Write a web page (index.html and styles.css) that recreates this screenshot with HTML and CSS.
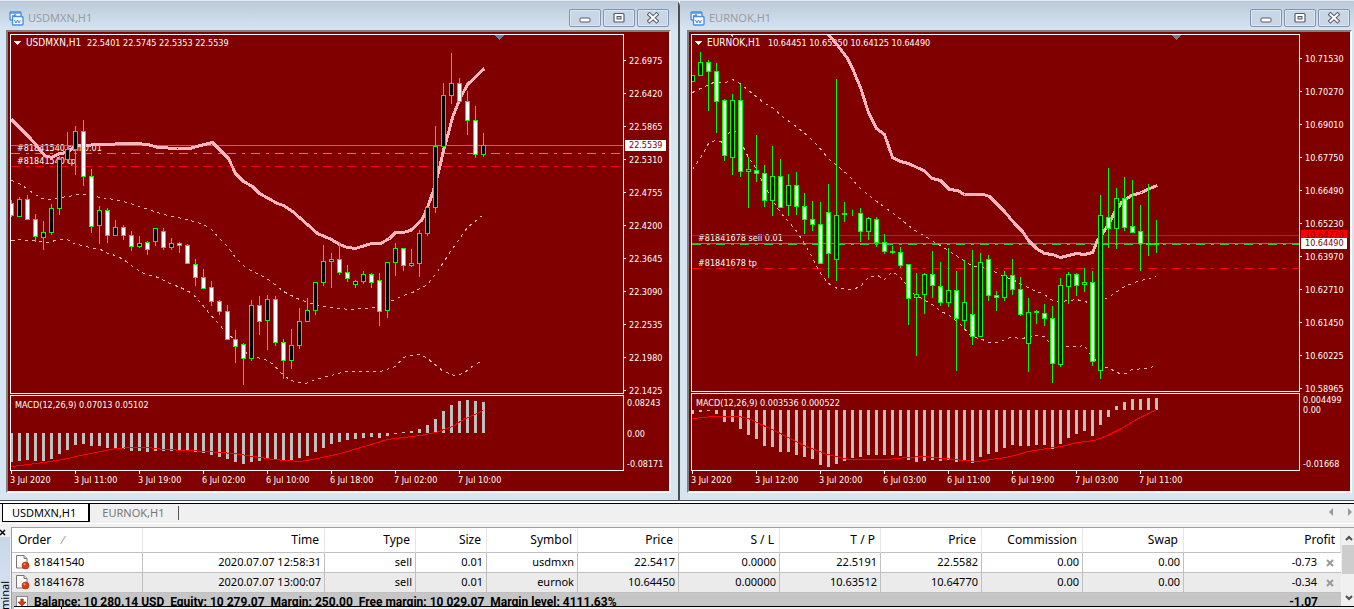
FILE: index.html
```
<!DOCTYPE html>
<html lang="en">
<head>
<meta charset="utf-8">
<title>Charts</title>
<link rel="stylesheet" href="styles.css">
</head>
<body>
<svg class="defs" width="0" height="0" aria-hidden="true">
  <symbol id="i-chart" viewBox="0 0 15 15">
    <rect x="1" y="1" width="11" height="8" rx="1" fill="#fff" stroke="#4a8ee0" stroke-width="1.4"/>
    <path d="M1 2h11" stroke="#4a8ee0" stroke-width="1.4"/>
    <path d="M3 6l1-2 1 2 1-3 1 2" fill="none" stroke="#4a8ee0"/>
    <rect x="3.5" y="5.500" width="10.500" height="8.500" rx="1" fill="#fff" stroke="#4a8ee0" stroke-width="1.4"/>
    <path d="M5.500 9l1.500 3 1.500-3 1.500 3 1.500-3" fill="none" stroke="#3577cc" stroke-width=".9"/>
  </symbol>
  <symbol id="i-min" viewBox="0 0 12 12"><rect x="1" y="6" width="10" height="4" rx="1" fill="#fff" stroke="#535b70"/></symbol>
  <symbol id="i-max" viewBox="0 0 12 12"><rect x="1" y="1.500" width="10" height="8.500" rx="1" fill="#fff" stroke="#535b70" stroke-width="1.2"/><rect x="4" y="4.500" width="4" height="2.500" fill="#c8d5e5" stroke="#535b70"/></symbol>
  <symbol id="i-close" viewBox="0 0 12 12"><path d="M2.500 2.500l7 6.500M9.500 2.500l-7 6.500" stroke="#535b70" stroke-width="4" stroke-linecap="square"/><path d="M2.500 2.500l7 6.500M9.500 2.500l-7 6.500" stroke="#fff" stroke-width="2" stroke-linecap="square"/></symbol>
  <symbol id="i-order" viewBox="0 0 15 16">
    <path d="M1.500 1.500h7.500l3 3v9.500h-10.500z" fill="#fff" stroke="#777"/>
    <path d="M9 1.500v3h3" fill="#ddd" stroke="#777"/>
    <circle cx="10.500" cy="11.500" r="3.500" fill="#dd3c14" stroke="#a22506" stroke-width=".6"/>
    <circle cx="9.500" cy="10.300" r="1" fill="#ff9a77"/>
  </symbol>
  <symbol id="i-balance" viewBox="0 0 15 16"><rect x="1.500" y="2.500" width="11" height="13" fill="#fff" stroke="#888"/><path d="M5.800 5h2.400v3h2.800L7 12 3 8h2.800z" fill="#dd3c14" stroke="#a22506" stroke-width=".7"/></symbol>
  <symbol id="i-x" viewBox="0 0 8 8"><path d="M1 1l6 6M7 1L1 7" stroke="#9a9a9a" stroke-width="2"/></symbol>
</svg>

<main class="workspace">
  <section class="window">
    <header class="titlebar">
      <svg class="window-icon"><use href="#i-chart"/></svg>
      <h2 class="window-title">USDMXN,H1</h2>
      <button class="window-button" aria-label="Minimize"><svg><use href="#i-min"/></svg></button>
      <button class="window-button" aria-label="Maximize"><svg><use href="#i-max"/></svg></button>
      <button class="window-button" aria-label="Close"><svg><use href="#i-close"/></svg></button>
    </header>
    <div class="chart chart-usd">
      <div class="plot plot-price">
        <svg class="canvas" id="usd-price">
          <path class="marker-open" d="M3 6h7l-3.500 4z"/>
          <text class="label label-symbol" x="15" y="11">USDMXN,H1</text>
          <text class="label" x="76" y="11">22.5401 22.5745 22.5353 22.5539</text>
          <text class="label" x="6" y="116">#81841540 sell 0.01</text>
          <text class="label" x="6" y="129">#81841540 tp</text>
          <path class="marker-shift" d="M483 0h10l-5 5z"/>
        </svg>
      </div>
      <div class="scale scale-price">
        <span>22.6975</span><span>22.6420</span><span>22.5865</span><span>22.5310</span><span>22.4755</span><span>22.4200</span><span>22.3645</span><span>22.3090</span><span>22.2535</span><span>22.1980</span><span>22.1425</span>
        <b class="badge badge-usd">22.5539</b>
      </div>
      <div class="plot plot-macd">
        <svg class="canvas" id="usd-macd"><text class="label" x="4" y="12">MACD(12,26,9) 0.07013 0.05102</text></svg>
      </div>
      <div class="scale scale-macd"><span>0.08243</span><span>0.00</span><span>-0.08171</span></div>
      <div class="times"><span>3 Jul 2020</span><span>3 Jul 11:00</span><span>3 Jul 19:00</span><span>6 Jul 02:00</span><span>6 Jul 10:00</span><span>6 Jul 18:00</span><span>7 Jul 02:00</span><span>7 Jul 10:00</span></div>
    </div>
  </section>

  <section class="window window-right">
    <header class="titlebar">
      <svg class="window-icon"><use href="#i-chart"/></svg>
      <h2 class="window-title">EURNOK,H1</h2>
      <button class="window-button" aria-label="Minimize"><svg><use href="#i-min"/></svg></button>
      <button class="window-button" aria-label="Maximize"><svg><use href="#i-max"/></svg></button>
      <button class="window-button" aria-label="Close"><svg><use href="#i-close"/></svg></button>
    </header>
    <div class="chart chart-eur">
      <div class="plot plot-price">
        <svg class="canvas" id="eur-price">
          <path class="marker-open" d="M3 6h7l-3.500 4z"/>
          <text class="label label-symbol" x="15" y="11">EURNOK,H1</text>
          <text class="label" x="76" y="11">10.64451 10.65350 10.64125 10.64490</text>
          <text class="label" x="6" y="206">#81841678 sell 0.01</text>
          <text class="label" x="6" y="231">#81841678 tp</text>
          <path class="marker-shift" d="M479 0h10l-5 5z"/>
        </svg>
      </div>
      <div class="scale scale-price">
        <span>10.71530</span><span>10.70270</span><span>10.69010</span><span>10.67750</span><span>10.66490</span><span>10.65230</span><span>10.63970</span><span>10.62710</span><span>10.61450</span><span>10.60225</span><span>10.58965</span>
        <b class="badge badge-ask">10.64770</b>
        <b class="badge badge-eur">10.64490</b>
      </div>
      <div class="plot plot-macd">
        <svg class="canvas" id="eur-macd"><text class="label" x="4" y="12">MACD(12,26,9) 0.003536 0.000522</text></svg>
      </div>
      <div class="scale scale-macd"><span>0.004499</span><span>0.00</span><span>-0.01668</span></div>
      <div class="times"><span>3 Jul 2020</span><span>3 Jul 12:00</span><span>3 Jul 20:00</span><span>6 Jul 03:00</span><span>6 Jul 11:00</span><span>6 Jul 19:00</span><span>7 Jul 03:00</span><span>7 Jul 11:00</span></div>
    </div>
  </section>
</main>

<nav class="tabs">
  <button class="tab tab-active">USDMXN,H1</button>
  <button class="tab">EURNOK,H1</button>
  <span class="tab-divider"></span>
  <button class="tab-arrow" aria-label="Scroll left"><svg viewBox="0 0 4 8"><path d="M4 0v8L0 4z"/></svg></button>
  <button class="tab-arrow" aria-label="Scroll right"><svg viewBox="0 0 4 8"><path d="M0 0v8l4-4z"/></svg></button>
</nav>

<section class="terminal">
  <aside class="rail">
    <button class="rail-close" aria-label="Close panel"><svg viewBox="0 0 8 8"><path d="M1 1l5 5M6 1L1 6" stroke="#000" stroke-width="1.500"/></svg></button>
    <div class="rail-grip"><span class="rail-name">Terminal</span></div>
  </aside>
  <div class="orders-wrap">
    <table class="orders">
      <colgroup><col class="c-order"><col class="c-time"><col class="c-type"><col class="c-size"><col class="c-type"><col class="c-num"><col class="c-num"><col class="c-num"><col class="c-num"><col class="c-num"><col class="c-num"><col></colgroup>
      <thead>
        <tr><th>Order <i class="sort">⁄</i></th><th>Time</th><th>Type</th><th>Size</th><th>Symbol</th><th>Price</th><th>S / L</th><th>T / P</th><th>Price</th><th>Commission</th><th>Swap</th><th>Profit</th></tr>
      </thead>
      <tbody>
        <tr><td><svg class="row-icon"><use href="#i-order"/></svg>81841540</td><td>2020.07.07 12:58:31</td><td>sell</td><td>0.01</td><td>usdmxn</td><td>22.5417</td><td>0.0000</td><td>22.5191</td><td>22.5582</td><td>0.00</td><td>0.00</td><td>-0.73<button class="row-close" aria-label="Close order"><svg><use href="#i-x"/></svg></button></td></tr>
        <tr><td><svg class="row-icon"><use href="#i-order"/></svg>81841678</td><td>2020.07.07 13:00:07</td><td>sell</td><td>0.01</td><td>eurnok</td><td>10.64450</td><td>0.00000</td><td>10.63512</td><td>10.64770</td><td>0.00</td><td>0.00</td><td>-0.34<button class="row-close" aria-label="Close order"><svg><use href="#i-x"/></svg></button></td></tr>
      </tbody>
      <tfoot>
        <tr><td colspan="11"><svg class="row-icon"><use href="#i-balance"/></svg>Balance: 10 280.14 USD&nbsp; Equity: 10 279.07&nbsp; Margin: 250.00&nbsp; Free margin: 10 029.07&nbsp; Margin level: 4111.63%</td><td>-1.07</td></tr>
      </tfoot>
    </table>
    <div class="scrollbar">
      <svg class="scroll-arrow" viewBox="0 0 8 6"><path d="M1 5l3-3 3 3"/></svg>
      <div class="scroll-thumb"></div>
      <svg class="scroll-arrow scroll-down" viewBox="0 0 8 6"><path d="M1 1l3 3 3-3"/></svg>
    </div>
    <div class="panel-tabs"><span class="panel-tab"></span></div>
  </div>
</section>
<script src="charts.js"></script>
</body>
</html>
```
FILE: styles.css
```
* { box-sizing: border-box; }
html, body { height: 100%; }
body {
  margin: 0;
  display: flex;
  flex-direction: column;
  overflow: hidden;
  background: #f0f0f0;
  color: #000;
  font-family: "Noto Sans", "Open Sans", sans-serif;
  font-size: 11px;
}
button { font: inherit; color: inherit; background: none; border: 0; padding: 0; margin: 0; }
svg { display: block; }
.defs { position: absolute; }

/* chart windows */
.workspace {
  flex: 1;
  min-height: 0;
  display: grid;
  grid-template-columns: 680fr 674fr;
  background: #fff;
  padding-bottom: 2px;
}
.window {
  display: flex;
  flex-direction: column;
  min-width: 0;
  min-height: 0;
  padding: 0 7px 7px 6px;
  background: #d7e4f2;
  border-right: 2px solid #4d4f4c;
  border-bottom: 1px solid #4d4f58;
  border-top-right-radius: 6px;
}
.window-right {
  padding: 0 2px 7px 7px;
  border-right: 0;
  border-top-right-radius: 0;
}
.titlebar {
  flex: none;
  display: flex;
  align-items: center;
  gap: 2px;
  height: 30px;
  margin: 0 -7px 0 -6px;
  padding: 5px 9px 0 9px;
  border-top: 1px solid #e3e9f0;
  background: linear-gradient(#bccad8, #d7e4f2);
}
.window-right .titlebar { margin: 0 -2px 0 -7px; padding: 5px 4px 0 10px; }
.window-icon { width: 15px; height: 15px; }
.window-title {
  flex: 1;
  margin: 0 0 0 2px;
  font-size: 11px;
  font-weight: 400;
  line-height: 18px;
  color: #979ca2;
}
.window-button {
  width: 32px;
  height: 18px;
  display: grid;
  place-items: center;
  border: 1px solid #8393b3;
  border-radius: 2px;
  box-shadow: inset 0 0 0 1px #dbe6f1;
  background: #c9d6e4;
}
.window-button svg { width: 12px; height: 12px; }

.chart {
  flex: 1;
  min-height: 0;
  display: grid;
  row-gap: 1px;
  padding: 2px 0 0 2px;
  background: #800000;
  border: 2px solid #808080;
  border-right-color: #fff;
  border-bottom-color: #fff;
  color: #fff;
  font-family: "DejaVu Sans Condensed", "Noto Sans", sans-serif;
  font-size: 9px;
}
.chart-usd { grid-template: 1fr 76px 19px / 1fr 45px; }
.chart-eur { grid-template: 1fr 78px 19px / 1fr 50px; }
.plot { border: 1px solid #fff; min-width: 0; min-height: 0; overflow: hidden; }
.canvas { width: 100%; height: 100%; shape-rendering: crispEdges; }
.label { fill: #fff; white-space: pre; }
.label-symbol { font-size: 10px; }
.marker-open { fill: #fff; }
.marker-shift { fill: #708090; }
.wick { stroke: #0f0; }
.body { stroke: #0f0; }
.up { fill: #000; }
.down { fill: #fff; }
.average { fill: none; stroke: #ffb6c1; stroke-width: 3; }
.band { fill: none; stroke: #ffb6c1; stroke-dasharray: 3 4; }
.bar { fill: #c0c0c0; }
.signal { fill: none; stroke: #f00; }
.bid { stroke: #708090; }
.ask { stroke: #f00; }
.entry { stroke: #32cd32; stroke-dasharray: 9 6 3 6; }
.target { stroke: #f00; stroke-dasharray: 9 6 3 6; }

.scale { position: relative; display: flex; flex-direction: column; min-height: 0; }
.scale-price { padding-top: 10px; }
.chart-eur .scale-price { padding-top: 8px; }
.scale-price span { position: relative; flex: none; height: 33px; line-height: 35px; padding-left: 5px; }
.scale-price span::before {
  content: "";
  position: absolute;
  left: 0;
  top: 16px;
  width: 2px;
  height: 1px;
  background: #fff;
}
.badge {
  position: absolute;
  left: 1px;
  width: 41px;
  height: 11px;
  line-height: 11px;
  padding-left: 4px;
  font-weight: 400;
  background: #fff;
  color: #800000;
}
.chart-eur .badge { width: 46px; }
.badge-usd { top: 106px; }
.badge-eur { top: 204px; }
.chart-eur .badge-ask { top: 196px; background: #f00; }
.scale-macd { padding: 1px 0 0 3px; justify-content: space-between; line-height: 14px; }
.chart-eur .scale-macd { padding: 2px 0 2px 3px; justify-content: flex-start; line-height: 10px; }
.chart-eur .scale-macd span:last-child { margin-top: auto; }
.times { display: flex; grid-column: 1 / -1; margin-top: -1px; }
.times span { position: relative; flex: none; width: 64px; line-height: 19px; }
.times span::before {
  content: "";
  position: absolute;
  left: 1px;
  top: 0;
  width: 1px;
  height: 3px;
  background: #fff;
}

/* chart tabs */
.tabs {
  flex: none;
  display: flex;
  height: 24px;
  padding: 0 2px;
  border-top: 1px solid #000;
  background: linear-gradient(#f0f0f0 19px, #fff 19px, #fff 20px, #f0f0f0 20px);
}
.tab { height: 18px; line-height: 16px; padding: 0 14px 0 12px; color: #777; }
.tab-active {
  padding: 0 12px 0 9px;
  background: #fff;
  color: #000;
  border: 1px solid #000;
  border-top: 0;
  border-right-width: 2px;
}
.tab-divider { width: 1px; height: 14px; margin: 2px auto 0 0; background: #555; }
.tab-arrow { width: 4px; height: 8px; margin: 4px 0 0 15px; }
.tab-arrow svg { width: 4px; height: 8px; fill: #999; }

/* terminal panel */
.terminal { flex: none; display: flex; height: 82px; overflow: hidden; }
.rail { flex: none; width: 11px; display: flex; flex-direction: column; }
.rail-close { height: 14px; width: 8px; margin-left: -1px; }
.rail-close svg { width: 8px; height: 8px; margin-top: 2px; }
.rail-grip { flex: 1; width: 10px; background: linear-gradient(#c9d8e8, #dae7f4); }
.rail-name { display: block; width: 10px; margin-top: 44px; writing-mode: vertical-rl; transform: rotate(180deg); line-height: 10px; }
.orders-wrap {
  position: relative;
  flex: 1;
  min-width: 0;
  display: flex;
  border-top: 1px solid #a0a0a0;
  border-left: 1px solid #a0a0a0;
}
.orders { flex: 1; align-self: flex-start; width: 0; border-collapse: separate; border-spacing: 0; table-layout: fixed; background: #fff; }
.c-order { width: 131px; }
.c-time { width: 182px; }
.c-type { width: 91px; }
.c-size { width: 71px; }
.c-num { width: 101px; }
.orders th {
  height: 25px;
  padding: 0 5px;
  font-size: 12px;
  font-weight: 400;
  line-height: 16px;
  text-align: right;
  border-right: 1px solid #e5e5e5;
  border-bottom: 1px solid #c0c0c0;
}
.orders th:first-child { padding-left: 6px; }
.orders td {
  height: 20px;
  padding: 0 3px 0 0;
  line-height: 18px;
  text-align: right;
  vertical-align: top;
  white-space: nowrap;
  border-right: 1px solid #c0c0c0;
  border-bottom: 1px solid #c0c0c0;
}
.orders th:first-child, .orders td:first-child { text-align: left; }
.orders td:last-child { border-right: 0; }
.orders tbody tr:nth-child(2) td { background: #ebebeb; }
.orders tfoot td { height: 18px; background: #c6c6c6; font-family: Roboto, "Noto Sans", sans-serif; font-size: 12px; font-weight: 700; border: 0; }
.orders tfoot td:last-child { padding-right: 23px; }
.sort { margin-left: 8px; font-size: 11px; color: #888; font-style: normal; }
.row-icon { display: inline-block; width: 15px; height: 16px; margin: 1px 4px 0 3px; vertical-align: top; }
.row-close { width: 8px; height: 8px; margin: 6px 4px 0 9px; vertical-align: top; }
.row-close svg { width: 8px; height: 8px; }
.scrollbar { flex: none; width: 13px; display: flex; flex-direction: column; align-items: flex-end; padding: 7px 1px 8px 0; background: #f0f0f0; }
.scroll-arrow { width: 8px; height: 6px; fill: none; stroke: #505050; stroke-width: 2; }
.scroll-down { margin-top: auto; }
.scroll-thumb { width: 12px; height: 29px; margin: 4px -1px 0 0; background: #cdcdcd; }
.panel-tabs {
  position: absolute;
  left: 2px;
  right: 0;
  bottom: 0;
  height: 3px;
  border-top: 1px solid #000;
  background: #f0f0f0;
}
.panel-tab { display: block; width: 48px; height: 2px; background: #fff; border-right: 1px solid #000; }
```
FILE: charts.js
```
// Bars: high, body top, body bottom, low, kind (u = up, d = down, n = flat).
const charts = [
  {
    id: "usd", left: 11, top: 35, macdTop: 396, zero: 433,
    levels: [["bid", 145], ["entry", 153], ["target", 166]],
    bars: `200 203 216 217 d|197 199 217 217 u|195 199 220 220 d|214 219 237 242 d|221 232 238 250 u|204 208 233 235 u|156 159 209 215 u|132 149 160 163 u|126 131 150 175 u|120 131 177 186 d|169 176 227 233 d|206 210 226 244 u|208 210 236 243 d|220 227 236 236 u|225 227 236 240 d|231 235 247 251 d|236 243 247 248 u|241 242 250 255 d|228 228 242 246 u|228 231 248 250 d|238 243 248 250 u|242 243 246 253 d|244 245 264 264 d|259 264 278 286 d|269 277 289 289 d|281 287 302 306 d|300 301 312 315 d|305 311 340 340 d|330 339 347 363 d|343 344 359 385 d|300 305 359 361 u|296 305 322 335 d|295 299 321 350 u|296 299 343 346 d|339 342 361 379 d|329 345 361 369 u|308 321 346 349 u|298 310 322 322 u|282 282 311 315 u|245 261 283 286 u|253 259 262 288 u|242 259 273 275 d|265 272 279 282 d|280 281 285 288 u|271 274 282 284 u|273 274 283 288 d|273 280 312 326 d|262 262 311 318 u|243 248 263 276 u|248 248 266 271 d|249 263 266 267 u|230 233 264 277 u|207 207 234 236 u|126 146 208 213 u|83 95 147 147 u|53 83 96 104 u|78 83 102 102 d|91 101 121 135 d|106 120 155 158 d|133 145 155 157 u`,
    average: "11,119 30,138 35,144 44,155 51,157 59,153 67,152 73,147 78,145 103,144 127,143 135,143 147,144 158,147 177,148 189,148 200,145 212,142 228,158 235,173 243,181 252,186 259,193 277,203 283,205 292,211 307,224 317,233 331,239 339,244 347,247 355,248 371,243 380,243 389,238 395,232 403,232 410,230 421,220 427,207 433,190 438,172 443,150 447,136 452,117 459,99 467,84 484,68",
    bands: [
      "11,180 19,183 33,193 42,198 51,199 59,197 68,196 77,194 87,194 100,197 120,200 133,204 163,214 187,219 203,224 211,229 219,238 227,246 235,257 245,267 268,279 283,291 299,299 317,305 339,308 350,309 373,307 383,305 390,301 403,295 412,292 427,284 437,271 452,248 467,227 482,215",
      "11,240 20,239 48,242 58,239 67,239 75,244 83,245 92,248 100,249 107,253 115,255 123,259 131,265 143,273 150,275 158,277 167,282 180,287 192,293 200,302 208,312 219,324 224,331 233,338 240,345 245,352 253,356 267,360 273,364 280,372 290,380 305,383 315,379 338,373 343,371 380,371 395,366 403,357 408,355 420,354 427,358 443,371 454,375 463,373 473,365 482,360"
    ],
    macd: "462 461 460 461 461 459 454 450 445 444 446 446 448 448 449 451 451 452 451 451 451 450 450 452 453 455 457 459 462 464 462 461 459 459 461 460 458 456 452 448 444 442 440 439 438 437 438 436 434 432 431 429 425 419 411 405 401 400 401 402",
    signal: "11,466 28,464 43,462 63,459 80,455 100,451 115,448 132,447 147,447 163,449 187,450 207,451 233,453 253,456 273,459 300,461 317,458 340,453 353,449 367,445 387,439 403,437 420,435 435,432 452,426 463,419 483,410"
  },
  {
    id: "eur", left: 692, top: 35, macdTop: 394, zero: 410,
    levels: [["ask", 235], ["entry", 244], ["bid", 243], ["target", 268]],
    bars: `75 75 82 82 u|52 62 76 76 u|60 62 72 111 d|63 71 102 133 d|99 100 156 161 d|94 100 158 175 u|84 100 172 177 d|157 169 172 208 u|135 170 174 182 d|165 173 201 207 d|146 176 201 216 u|159 176 208 208 d|174 185 206 216 u|172 185 207 215 d|193 206 220 234 d|201 219 225 231 d|202 224 264 264 d|184 212 254 278 d|79 215 260 281 u|202 213 215 222 n|210 213 214 216 n|208 213 232 242 d|217 218 232 240 u|217 219 243 247 d|234 242 252 254 d|246 251 253 254 n|247 252 266 268 d|264 264 299 325 d|273 294 298 356 u|273 274 295 314 u|251 274 286 298 d|262 286 303 306 d|248 290 303 307 u|271 290 319 371 d|260 302 321 329 u|250 314 337 345 d|253 262 337 337 u|255 259 296 301 d|291 295 298 311 d|271 275 298 301 u|259 275 290 295 d|277 289 315 316 d|298 312 344 372 u|310 311 313 324 n|304 313 319 326 d|306 318 364 383 d|278 285 365 367 u|272 274 287 304 u|273 274 286 296 d|268 282 285 292 u|271 282 362 366 d|195 215 371 379 u|168 217 229 248 d|188 198 229 249 u|177 198 228 231 d|180 226 233 233 d|205 231 244 271 d|184 243 245 256 n|220 243 245 253 n`,
    average: "828,34 838,46 847,58 852,68 860,87 868,112 876,128 884,134 892,157 900,161 908,163 923,170 932,178 940,180 949,189 957,190 964,194 983,194 989,196 1004,211 1014,223 1022,231 1028,240 1036,248 1044,253 1052,254 1060,257 1068,255 1076,253 1084,254 1092,252 1097,240 1102,233 1108,224 1114,212 1121,202 1131,195 1141,192 1149,188 1157,185",
    bands: [
      "692,92 702,87 713,82 725,82 732,79 738,82 748,90 763,102 772,107 783,117 793,124 808,136 817,145 828,158 847,174 859,187 872,198 893,213 913,229 933,241 948,250 963,260 973,266 988,268 1003,276 1014,280 1029,288 1044,294 1052,300 1061,301 1076,299 1084,301 1092,303 1106,298 1124,286 1137,281 1156,276",
      "692,169 702,154 708,143 715,140 723,142 728,133 732,129 737,133 743,147 748,157 757,170 761,180 772,200 780,212 788,221 797,232 808,250 820,273 828,283 837,288 852,289 860,286 868,277 877,275 884,279 892,271 900,277 913,293 925,300 935,306 940,311 948,314 960,324 972,337 980,338 988,342 998,342 1010,337 1022,338 1034,335 1044,336 1052,346 1064,346 1077,346 1084,345 1092,357 1101,365 1111,369 1119,373 1126,373 1131,369 1147,368 1156,365",
      "731,34 732,36 734,34"
    ],
    macd: "414 412 411 414 422 422 429 435 439 446 447 452 452 455 457 459 465 467 464 461 458 457 455 455 455 455 456 460 462 461 460 461 460 462 461 463 457 454 452 448 445 446 446 445 445 449 444 438 434 431 436 425 417 406 402 399 399 398 398",
    signal: "692,418 713,416 738,416 748,418 763,425 780,433 803,445 827,454 848,459 887,459 907,457 923,456 943,458 963,460 977,461 990,459 1005,457 1014,455 1027,451 1047,448 1061,446 1076,442 1094,440 1107,435 1121,428 1134,420 1156,409"
  }
];

const STEP = 8;

function add(parent, tag, attrs) {
  const el = document.createElementNS("http://www.w3.org/2000/svg", tag);
  for (const key in attrs) el.setAttribute(key, attrs[key]);
  parent.append(el);
  return el;
}

function shift(points, dx, dy) {
  return points.split(" ").map(p => {
    const [x, y] = p.split(",").map(Number);
    return `${x - dx + 0.5},${y - dy + 0.5}`;
  }).join(" ");
}

for (const c of charts) {
  const price = document.getElementById(`${c.id}-price`);
  for (const [kind, y] of c.levels) {
    add(price, "line", { class: kind, x1: 0, x2: "100%", y1: y - c.top + 0.5, y2: y - c.top + 0.5 });
  }
  for (const band of c.bands) add(price, "polyline", { class: "band", points: shift(band, c.left, c.top) });
  add(price, "polyline", { class: "average", points: shift(c.average, c.left, c.top) });
  c.bars.split("|").forEach((row, i) => {
    const parts = row.split(" ");
    const [high, top, bottom, low] = parts.slice(0, 4).map(v => v - c.top);
    const x = i * STEP + 0.5;
    add(price, "line", { class: "wick", x1: x, x2: x, y1: high, y2: low });
    const kind = { u: "up", d: "down", n: "flat" }[parts[4]];
    add(price, "rect", { class: `body ${kind}`, x: x - 2, y: top + 0.5, width: 4, height: bottom - top - 1 });
  });

  const macd = document.getElementById(`${c.id}-macd`);
  const zero = c.zero - c.macdTop;
  c.macd.split(" ").forEach((v, i) => {
    const y = v - c.macdTop;
    add(macd, "rect", { class: "bar", x: i * STEP - 1, y: Math.min(y, zero), width: 3, height: Math.abs(y - zero) });
  });
  add(macd, "polyline", { class: "signal", points: shift(c.signal, c.left, c.macdTop) });
}
```
